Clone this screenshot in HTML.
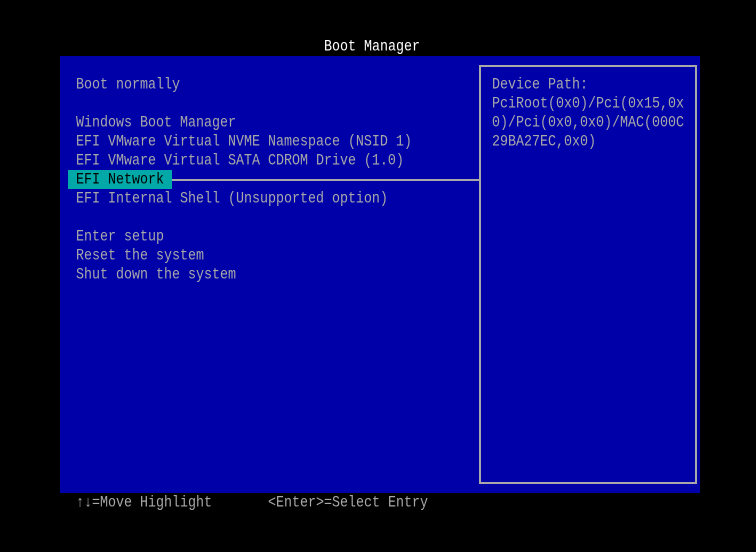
<!DOCTYPE html>
<html><head><meta charset="utf-8"><style>
html,body{margin:0;padding:0;background:#000;width:756px;height:552px;overflow:hidden}
body{position:relative;font-family:"Liberation Mono","DejaVu Sans Mono",monospace;font-size:13.33px;color:#a8a8a8}
.t{position:absolute;height:19px;line-height:19px;white-space:pre;transform:translateY(1px) scaleY(1.15);transform-origin:0 50%}
#panel{position:absolute;left:60px;top:56px;width:640px;height:437px;background:#0000a8}
#box{position:absolute;left:479px;top:65px;border:2px solid #a8a8a8}
#hl{position:absolute;left:68px;top:170px;width:104px;height:19px;background:#00a8a8}
#line{position:absolute;left:172px;top:179px;width:308px;height:2px;background:#a8a8a8}
</style></head><body>
<div id="panel"></div>
<div id="box" style="width:214px;height:415px"></div>
<div id="hl"></div>
<div id="line"></div>
<div class="t" style="left:324px;top:37px;color:#fff">Boot Manager</div>
<div class="t" style="left:76px;top:75px">Boot normally</div>
<div class="t" style="left:76px;top:113px">Windows Boot Manager</div>
<div class="t" style="left:76px;top:132px">EFI VMware Virtual NVME Namespace (NSID 1)</div>
<div class="t" style="left:76px;top:151px">EFI VMware Virtual SATA CDROM Drive (1.0)</div>
<div class="t" style="left:76px;top:170px;color:#000">EFI Network</div>
<div class="t" style="left:76px;top:189px">EFI Internal Shell (Unsupported option)</div>
<div class="t" style="left:76px;top:227px">Enter setup</div>
<div class="t" style="left:76px;top:246px">Reset the system</div>
<div class="t" style="left:76px;top:265px">Shut down the system</div>
<div class="t" style="left:492px;top:75px">Device Path:</div>
<div class="t" style="left:492px;top:94px">PciRoot(0x0)/Pci(0x15,0x</div>
<div class="t" style="left:492px;top:113px">0)/Pci(0x0,0x0)/MAC(000C</div>
<div class="t" style="left:492px;top:132px">29BA27EC,0x0)</div>
<div class="t" style="left:76px;top:493px">↑↓=Move Highlight</div>
<div class="t" style="left:268px;top:493px">&lt;Enter&gt;=Select Entry</div>
</body></html>
